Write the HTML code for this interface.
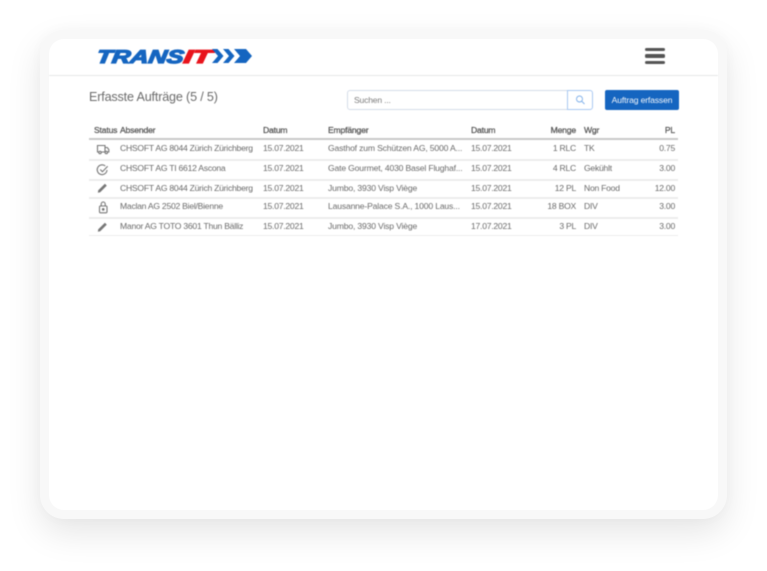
<!DOCTYPE html>
<html lang="de">
<head>
<meta charset="utf-8">
<title>Transit</title>
<style>
html,body{margin:0;padding:0;background:#fff;}
body{width:767px;height:571px;overflow:hidden;position:relative;font-family:"Liberation Sans",sans-serif;}
.frame{position:absolute;left:40px;top:30px;width:687px;height:489px;background:#f8f8f8;border-radius:24px;box-shadow:0 14px 34px rgba(0,0,0,.1),0 0 14px rgba(0,0,0,.025);}
.screen{position:absolute;left:49px;top:39px;width:669px;height:471px;background:#fff;border-radius:15px;overflow:hidden;}
.abs{position:absolute;white-space:nowrap;}
.blur{position:absolute;left:0;top:0;width:767px;height:571px;filter:blur(.45px);}
.hr{position:absolute;left:49px;width:669px;top:75px;height:1px;background:#e6e8e8;}
.burger{position:absolute;left:645px;width:20px;height:3.4px;background:#555;border-radius:1.5px;}
.title{left:89px;top:90px;font-size:12.6px;line-height:15px;color:#6b6b6b;letter-spacing:-.17px;}
.search{position:absolute;left:347px;top:90px;width:221px;height:18px;border:1px solid #d5dde8;border-radius:3px 0 0 3px;background:#fff;}
.search span{position:absolute;left:6px;top:3px;font-size:8.6px;line-height:12px;color:#7d7d7d;letter-spacing:-.2px;}
.sbtn{position:absolute;left:567px;top:90px;width:24px;height:18px;border:1px solid #a9c9f2;border-radius:0 3px 3px 0;background:#fff;}
.add{position:absolute;left:605px;top:90px;width:74px;height:20px;background:#1565c0;border-radius:2px;color:#f2f6fb;font-size:8.6px;line-height:20px;text-align:center;letter-spacing:-.15px;}
.th{position:absolute;top:125px;font-size:8.6px;line-height:11px;font-weight:400;color:#555;-webkit-text-stroke:.25px #555;white-space:nowrap;letter-spacing:-.18px;}
.td{position:absolute;font-size:8.6px;line-height:11px;color:#6a6a6a;white-space:nowrap;letter-spacing:-.25px;}
.e{letter-spacing:-.17px;}
.r{text-align:right;}
.line{position:absolute;left:89px;width:589px;background:#ececec;height:1px;}
</style>
</head>
<body>
<div class="frame"></div>
<div class="screen"></div>
<div class="blur">
<svg class="abs" style="left:90px;top:44px" width="170" height="24" viewBox="0 0 170 24">
<g transform="translate(5 19) skewX(-8)">
<text x="1" y="0" font-family="Liberation Sans" font-weight="700" font-style="italic" font-size="18.500" textLength="87" lengthAdjust="spacingAndGlyphs" fill="#1565c0" stroke="#1565c0" stroke-width="1.300">TRANS</text>
<text x="88" y="0" font-family="Liberation Sans" font-weight="700" font-style="italic" font-size="18.500" textLength="28" lengthAdjust="spacingAndGlyphs" fill="#e8141c" stroke="#e8141c" stroke-width="1.300">IT</text>
</g>
<path d="M122 5h5.500l6 7-6 7H122l6-7zM133 5h5.500l6 7-6 7H133l6-7zM144 5h12l6 7-6 7h-12l6-7z" fill="#1565c0"/>
</svg>
<div class="hr"></div>
<div class="burger" style="top:48px"></div>
<div class="burger" style="top:54.3px"></div>
<div class="burger" style="top:60.6px"></div>

<div class="abs title">Erfasste Aufträge (5 / 5)</div>
<div class="search"><span>Suchen ...</span></div>
<div class="sbtn"><svg width="24" height="18" viewBox="0 0 24 18" style="display:block"><circle cx="11.500" cy="8" r="3" fill="none" stroke="#7fb0ea" stroke-width=".9"/><path d="M13.800 10.300l2.700 2.700" stroke="#7fb0ea" stroke-width="1" fill="none"/></svg></div>
<div class="add">Auftrag erfassen</div>

<div class="th" style="left:94px">Status</div>
<div class="th" style="left:120px">Absender</div>
<div class="th" style="left:263px">Datum</div>
<div class="th" style="left:328px">Empfänger</div>
<div class="th" style="left:471px">Datum</div>
<div class="th r" style="left:530px;width:46px">Menge</div>
<div class="th" style="left:584px">Wgr</div>
<div class="th r" style="left:640px;width:35px">PL</div>
<div class="line" style="top:138px;height:2px;background:#c9c9c9"></div>

<div class="td" style="left:120px;top:143px">CHSOFT AG 8044 Zürich Zürichberg</div>
<div class="td" style="left:263px;top:143px">15.07.2021</div>
<div class="td e" style="left:328px;top:143px">Gasthof zum Schützen AG, 5000 A...</div>
<div class="td" style="left:471px;top:143px">15.07.2021</div>
<div class="td r" style="left:530px;width:46px;top:143px">1 RLC</div>
<div class="td" style="left:584px;top:143px">TK</div>
<div class="td r" style="left:640px;width:35px;top:143px">0.75</div>
<div class="line" style="top:159px;height:2px"></div>

<div class="td" style="left:120px;top:163px">CHSOFT AG TI 6612 Ascona</div>
<div class="td" style="left:263px;top:163px">15.07.2021</div>
<div class="td e" style="left:328px;top:163px">Gate Gourmet, 4030 Basel Flughaf...</div>
<div class="td" style="left:471px;top:163px">15.07.2021</div>
<div class="td r" style="left:530px;width:46px;top:163px">4 RLC</div>
<div class="td" style="left:584px;top:163px">Gekühlt</div>
<div class="td r" style="left:640px;width:35px;top:163px">3.00</div>
<div class="line" style="top:179px;height:2px"></div>

<div class="td" style="left:120px;top:183px">CHSOFT AG 8044 Zürich Zürichberg</div>
<div class="td" style="left:263px;top:183px">15.07.2021</div>
<div class="td e" style="left:328px;top:183px">Jumbo, 3930 Visp Viège</div>
<div class="td" style="left:471px;top:183px">15.07.2021</div>
<div class="td r" style="left:530px;width:46px;top:183px">12 PL</div>
<div class="td" style="left:584px;top:183px">Non Food</div>
<div class="td r" style="left:640px;width:35px;top:183px">12.00</div>
<div class="line" style="top:197px;height:2px"></div>

<div class="td" style="left:120px;top:201px">Maclan AG 2502 Biel/Bienne</div>
<div class="td" style="left:263px;top:201px">15.07.2021</div>
<div class="td e" style="left:328px;top:201px">Lausanne-Palace S.A., 1000 Laus...</div>
<div class="td" style="left:471px;top:201px">15.07.2021</div>
<div class="td r" style="left:530px;width:46px;top:201px">18 BOX</div>
<div class="td" style="left:584px;top:201px">DIV</div>
<div class="td r" style="left:640px;width:35px;top:201px">3.00</div>
<div class="line" style="top:217px;height:2px"></div>

<div class="td" style="left:120px;top:221px">Manor AG TOTO 3601 Thun Bälliz</div>
<div class="td" style="left:263px;top:221px">15.07.2021</div>
<div class="td e" style="left:328px;top:221px">Jumbo, 3930 Visp Viège</div>
<div class="td" style="left:471px;top:221px">17.07.2021</div>
<div class="td r" style="left:530px;width:46px;top:221px">3 PL</div>
<div class="td" style="left:584px;top:221px">DIV</div>
<div class="td r" style="left:640px;width:35px;top:221px">3.00</div>
<div class="line" style="top:235px"></div>

<svg class="abs" style="left:94px;top:141px" width="18" height="96" viewBox="0 0 18 96" fill="none" stroke="#777" stroke-width="1.100">
<path d="M3.500 4.500h7.500v6.500H3.500zM11 6.500h2.300l1.500 2v2.500H11"/>
<circle cx="6" cy="11.500" r="1.200" fill="#fff"/><circle cx="12.300" cy="11.500" r="1.200" fill="#fff"/>
<path d="M13 29a4.900 4.900 0 1 1-1.700-4" /><path d="M6.200 28.500l2.200 2.200 5.300-5.500"/>
<path d="M3.800 51.700l.5-2.400 6.600-6.600 1.900 1.900-6.600 6.600z" fill="#777" stroke="none"/>
<rect x="5.500" y="65" width="7.500" height="6.800" rx="1"/><path d="M7.200 65v-2a2 2 0 0 1 4 0v2"/><circle cx="9.200" cy="68.400" r=".8" fill="#777"/>
<path d="M3.800 90.700l.5-2.400 6.600-6.600 1.900 1.900-6.600 6.600z" fill="#777" stroke="none"/>
</svg>
</div>
</body>
</html>
